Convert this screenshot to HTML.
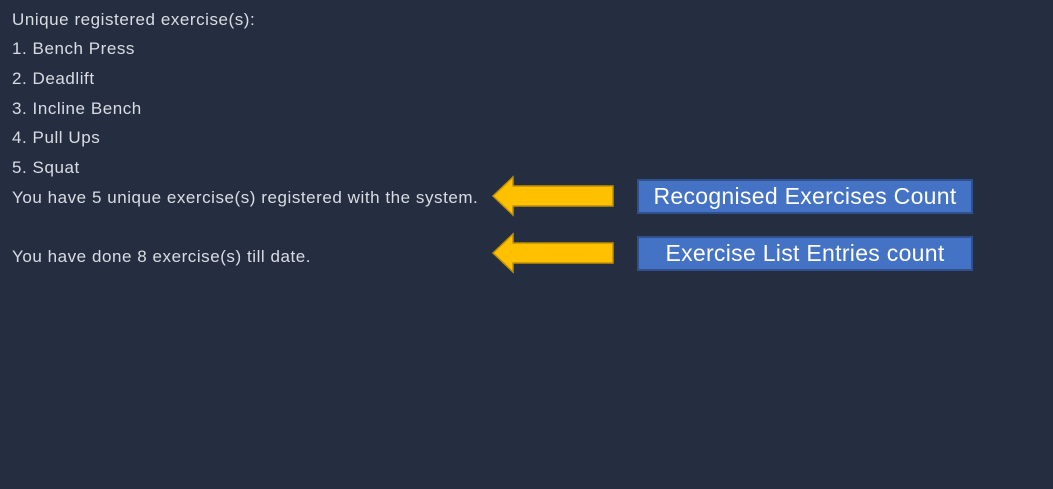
<!DOCTYPE html>
<html><head><meta charset="utf-8"><style>
html,body{margin:0;padding:0;}
body{width:1053px;height:489px;background:#252d40;position:relative;overflow:hidden;font-family:"Liberation Sans",sans-serif;}
.t{position:absolute;left:12px;color:#d9dde3;font-size:17px;letter-spacing:0.55px;line-height:20px;white-space:nowrap;}
.box{position:absolute;left:637px;width:332px;height:31px;background:#4472c4;border:2px solid #2f528f;color:#fff;font-size:23px;letter-spacing:0.3px;line-height:31px;text-align:center;white-space:nowrap;}
svg{position:absolute;}
</style></head><body>
<div class="t" style="top:10px">Unique registered exercise(s):</div>
<div class="t" style="top:39px">1. Bench Press</div>
<div class="t" style="top:69px">2. Deadlift</div>
<div class="t" style="top:99px">3. Incline Bench</div>
<div class="t" style="top:128px">4. Pull Ups</div>
<div class="t" style="top:158px">5. Squat</div>
<div class="t" style="top:188px">You have 5 unique exercise(s) registered with the system.</div>
<div class="t" style="top:247px">You have done 8 exercise(s) till date.</div>
<svg style="left:490px;top:174px" width="126" height="44"><polygon points="3,22 23,3 23,12 123,12 123,32 23,32 23,41" fill="#ffc000" stroke="#c09000" stroke-width="1.5"/></svg>
<svg style="left:490px;top:231px" width="126" height="44"><polygon points="3,22 23,3 23,12 123,12 123,32 23,32 23,41" fill="#ffc000" stroke="#c09000" stroke-width="1.5"/></svg>
<div class="box" style="top:179px">Recognised Exercises Count</div>
<div class="box" style="top:236px">Exercise List Entries count</div>
</body></html>
